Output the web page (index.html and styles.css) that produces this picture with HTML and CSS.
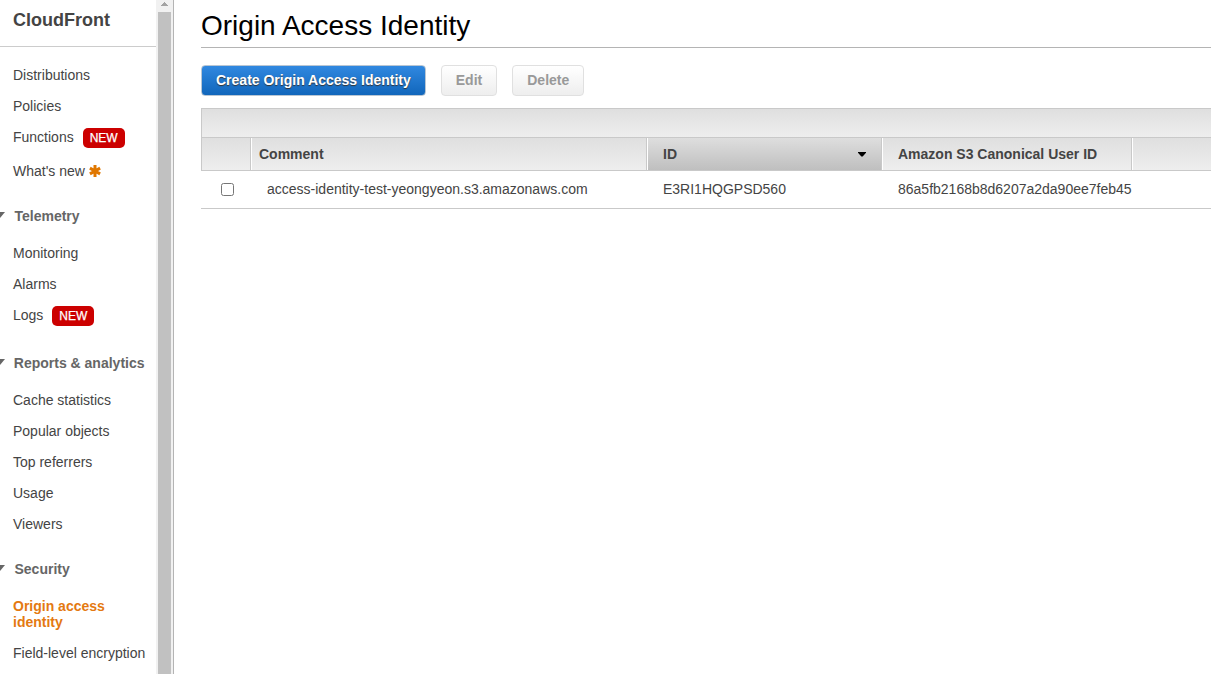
FILE: index.html
```html
<!DOCTYPE html>
<html lang="en">
<head>
<meta charset="utf-8">
<title>CloudFront - Origin Access Identity</title>
<link rel="stylesheet" href="styles.css">
</head>
<body>
<div class="app">
  <aside class="sidebar">
    <div class="brand">CloudFront</div>
    <nav>
      <ul class="nav-list first">
        <li>Distributions</li>
        <li>Policies</li>
        <li class="tagged">Functions<span class="badge">NEW</span></li>
        <li class="whats-new">What's new
          <svg class="star" width="12" height="12" viewBox="0 0 12 12"><path d="M6 0V12M0.9 3.1L11.1 8.9M11.1 3.1L0.9 8.9" stroke="#e07700" stroke-width="3" fill="none"/></svg>
        </li>
      </ul>
      <h3 class="group"><svg class="caret" width="5" height="6" viewBox="0 0 5 6"><path d="M0 0H5L0 6Z" fill="#666"/></svg>Telemetry</h3>
      <ul class="nav-list">
        <li>Monitoring</li>
        <li>Alarms</li>
        <li class="tagged">Logs<span class="badge">NEW</span></li>
      </ul>
      <h3 class="group reports"><svg class="caret" width="5" height="6" viewBox="0 0 5 6"><path d="M0 0H5L0 6Z" fill="#666"/></svg>Reports &amp; analytics</h3>
      <ul class="nav-list">
        <li>Cache statistics</li>
        <li>Popular objects</li>
        <li>Top referrers</li>
        <li>Usage</li>
        <li>Viewers</li>
      </ul>
      <h3 class="group"><svg class="caret" width="5" height="6" viewBox="0 0 5 6"><path d="M0 0H5L0 6Z" fill="#666"/></svg>Security</h3>
      <ul class="nav-list">
        <li class="current">Origin access identity</li>
        <li>Field-level encryption</li>
      </ul>
    </nav>
  </aside>
  <div class="scrollbar">
    <svg class="scroll-up" width="7" height="4" viewBox="0 0 7 4" shape-rendering="crispEdges"><path d="M3 0H4V1H5V2H6V3H7V4H0V3H1V2H2V1H3Z" fill="#a3a3a3"/></svg>
    <div class="thumb"></div>
  </div>
  <main class="content">
    <h1 class="title">Origin Access Identity</h1>
    <div class="actions">
      <button class="btn primary">Create Origin Access Identity</button>
      <button class="btn" disabled>Edit</button>
      <button class="btn" disabled>Delete</button>
    </div>
    <div class="grid">
      <div class="toolbar"></div>
      <div class="row head">
        <div class="cell"></div>
        <div class="cell">Comment</div>
        <div class="cell sorted">ID<svg width="8" height="5" viewBox="0 0 8 5"><path d="M0 0H8V0.8L4.7 4.5H3.3L0 0.8Z" fill="#000"/></svg></div>
        <div class="cell">Amazon S3 Canonical User ID</div>
        <div class="cell"></div>
      </div>
      <div class="row data">
        <div class="cell pick"><input type="checkbox" class="check" aria-label="Select identity"></div>
        <div class="cell comment">access-identity-test-yeongyeon.s3.amazonaws.com</div>
        <div class="cell">E3RI1HQGPSD560</div>
        <div class="cell">86a5fb2168b8d6207a2da90ee7feb45</div>
        <div class="cell"></div>
      </div>
    </div>
  </main>
</div>
</body>
</html>
```
FILE: styles.css
```css
* { box-sizing: border-box; }
body {
  margin: 0;
  font-family: "Liberation Sans", Arial, sans-serif;
  font-size: 14px;
  line-height: 16px;
  color: #444;
  background: #fff;
}
.app { display: flex; height: 674px; overflow: hidden; }

.sidebar { flex: 0 0 156px; overflow: hidden; }
.brand {
  height: 47px;
  padding: 9px 13px 0;
  border-bottom: 1px solid #ccc;
  font-size: 18px;
  line-height: 22px;
  font-weight: bold;
}
.nav-list {
  display: flex;
  flex-direction: column;
  gap: 15px;
  margin: 0;
  padding: 0 0 0 13px;
  list-style: none;
  white-space: nowrap;
}
.nav-list.first { padding-top: 20px; }
.tagged { display: flex; height: 16px; }
.badge {
  height: 20px;
  margin: -1px 0 0 9px;
  padding: 0 7px;
  border-radius: 5px;
  background: #c00;
  color: #fff;
  font-size: 12px;
  line-height: 20px;
  -webkit-text-stroke: 0.25px #fff;
}
.whats-new { display: flex; gap: 4px; margin-top: 3px; }
.star { margin-top: 2px; }
.group {
  display: flex;
  gap: 9.5px;
  margin: 29px 0 21px;
  font-size: 14px;
  line-height: 16px;
  color: #666;
  white-space: nowrap;
}
.group.reports { gap: 8.8px; margin-top: 32px; }
.caret { margin-top: 4px; }
.current { width: 110px; color: #e47911; font-weight: bold; white-space: normal; }

.scrollbar {
  display: flex;
  flex-direction: column;
  flex: 0 0 18px;
  padding: 2px 2px 0;
  border-right: 1px solid #b4b4b4;
  background: #f1f1f1;
}
.scroll-up { flex: none; margin: 0 3px 6px; }
.thumb { flex: 1; background: #c1c1c1; }

.content { flex: 1; min-width: 0; padding-left: 27px; }
.title {
  height: 48px;
  margin: 0;
  padding-top: 10px;
  border-bottom: 1px solid #b4b4b4;
  font-size: 28px;
  line-height: 32px;
  font-weight: normal;
  color: #000;
}
.actions { display: flex; gap: 15px; padding: 17px 0 12px; }
.btn {
  height: 31px;
  padding: 0 14px 1px;
  border: 1px solid #e0e0e0;
  border-radius: 4px;
  background: linear-gradient(#fff, #eee);
  color: #999;
  font: bold 14px/28px "Liberation Sans", Arial, sans-serif;
}
.primary {
  border-color: #b9c6d3;
  background: linear-gradient(#3088e0, #1166bb);
  color: #fff;
  text-shadow: 0 1px 1px #333;
}

.toolbar {
  height: 30px;
  border: solid #c9c9c9;
  border-width: 1px 0 1px 1px;
  background: linear-gradient(#dfdfdf, #eee);
}
.row { display: grid; }
.cell { min-width: 0; white-space: nowrap; }
.head {
  height: 33px;
  border: solid #c9c9c9;
  border-width: 0 0 1px 1px;
  grid-template-columns: 49px 396px 235px 250px 1fr;
  background: linear-gradient(#dfdfdf, #eee);
  font-weight: bold;
}
.head .cell { padding: 8px 8px 0; border-left: 1px solid #fff; border-right: 1px solid #c9c9c9; }
.head .cell:first-child { border-left: 0; }
.head .cell:last-child { border-right: 0; }
.head .cell:nth-child(2) { padding-left: 7px; }
.head .cell:nth-child(n+3) { padding-left: 15px; }
.head .sorted {
  display: flex;
  justify-content: space-between;
  padding-right: 15px;
  background: linear-gradient(#dedede, #bfbfbf);
}
.sorted svg { margin-top: 6px; }
.data {
  height: 38px;
  padding-top: 10px;
  border-bottom: 1px solid #c9c9c9;
  grid-template-columns: 50px 397px 235px 250px 1fr;
}
.data .cell { padding-left: 15px; }
.data .pick { padding-left: 20px; }
.data .comment { padding-left: 16px; }
.check { display: block; width: 13px; height: 13px; margin: 2px 0 0; }
```
